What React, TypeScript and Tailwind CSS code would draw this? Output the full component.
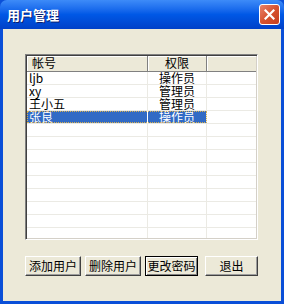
import React from "react";

const font = { fontFamily: '"Noto Sans CJK SC", "Noto Sans", sans-serif' };

const rows = [
  { name: "ljb", role: "操作员" },
  { name: "xy", role: "管理员" },
  { name: "王小五", role: "管理员" },
  { name: "张良", role: "操作员", selected: true },
];

function Btn({ label, def, w }: { label: string; def?: boolean; w: string }) {
  return (
    <div
      className={`${w} h-[20px] flex items-center justify-center bg-[#ECE9D8] text-[12px] leading-none text-black ${
        def
          ? "border border-black shadow-[inset_1px_1px_0_#fff,inset_-1px_-1px_0_#808080]"
          : "border-t border-l border-t-white border-l-white border-b border-r border-b-[#404040] border-r-[#404040] shadow-[inset_-1px_-1px_0_#9d9d9d]"
      }`}
    >
      {label}
    </div>
  );
}

export default function App() {
  const empty = Array.from({ length: 8 });
  return (
    <div className="w-[284px] h-[304px] flex flex-col bg-[#0A4FD8]" style={font}>
      {/* title bar */}
      <div className="h-[29px] shrink-0 flex items-center justify-between pl-[7px] pr-[4px] rounded-t-[7px] bg-gradient-to-b from-[#3D8BF8] via-[#0058E6] to-[#0040C8]">
        <span className="text-white font-bold text-[13px] [text-shadow:1px_1px_0_#0A1E6E]">用户管理</span>
        <div className="w-[21px] h-[21px] rounded-[3px] border border-white bg-gradient-to-br from-[#E9826A] via-[#D6522F] to-[#C63E1F] flex items-center justify-center">
          <svg width="11" height="11" viewBox="0 0 11 11">
            <path d="M1.5 1.5 L9.5 9.5 M9.5 1.5 L1.5 9.5" stroke="white" strokeWidth="2.2" strokeLinecap="square" />
          </svg>
        </div>
      </div>
      {/* body */}
      <div className="flex-1 flex flex-col mx-[3px] mb-[3px] bg-[#ECE9D8] pt-[25px] pl-[22px]">
        {/* list view */}
        <div className="w-[233px] h-[186px] bg-white border-t border-l border-t-[#808080] border-l-[#808080] border-b border-r border-b-white border-r-white shadow-[inset_1px_1px_0_#404040,inset_-1px_-1px_0_#D4D0C8] p-[1px] flex flex-col overflow-hidden">
          {/* header */}
          <div className="h-[16px] shrink-0 flex text-[12px] leading-[14px]">
            <div className="w-[121px] bg-[#ECE9D8] border-r border-b border-r-[#808080] border-b-[#808080] shadow-[inset_1px_1px_0_#fff] pl-[5px]">帐号</div>
            <div className="w-[59px] bg-[#ECE9D8] border-r border-b border-r-[#808080] border-b-[#808080] shadow-[inset_1px_1px_0_#fff] text-center">权限</div>
            <div className="flex-1 bg-[#ECE9D8] border-b border-b-[#808080] shadow-[inset_1px_1px_0_#fff]"></div>
          </div>
          {rows.map((r) => (
            <div key={r.name} className="h-[13px] shrink-0 flex text-[12px] leading-[12px] border-b border-b-[#EBEAE4]">
              <div className={`w-[180px] flex ${r.selected ? "outline outline-1 outline-dotted outline-[#D8B050] -outline-offset-1" : ""}`}>
                <div className={`w-[121px] pl-[2px] border-r ${r.selected ? "bg-[#316AC5] text-white border-r-white" : "text-black border-r-[#EBEAE4]"}`}>
                  {r.name}
                </div>
                <div className={`w-[59px] border-r border-r-[#EBEAE4] text-center ${r.selected ? "bg-[#316AC5] text-white" : "text-black"}`}>
                  {r.role}
                </div>
              </div>
              <div className="flex-1"></div>
            </div>
          ))}
          {empty.map((_, i) => (
            <div key={i} className="h-[13px] shrink-0 flex border-b border-b-[#EBEAE4]">
              <div className="w-[121px] border-r border-r-[#EBEAE4]"></div>
              <div className="w-[59px] border-r border-r-[#EBEAE4]"></div>
              <div className="flex-1"></div>
            </div>
          ))}
          <div className="flex-1 flex">
            <div className="w-[121px] border-r border-r-[#EBEAE4]"></div>
            <div className="w-[59px] border-r border-r-[#EBEAE4]"></div>
            <div className="flex-1"></div>
          </div>
        </div>
        {/* buttons */}
        <div className="flex mt-[16px]">
          <Btn label="添加用户" w="w-[56px]" />
          <div className="w-[4px]" />
          <Btn label="删除用户" w="w-[56px]" />
          <div className="w-[4px]" />
          <Btn label="更改密码" w="w-[53px]" def />
          <div className="w-[7px]" />
          <Btn label="退出" w="w-[53px]" />
        </div>
      </div>
    </div>
  );
}
